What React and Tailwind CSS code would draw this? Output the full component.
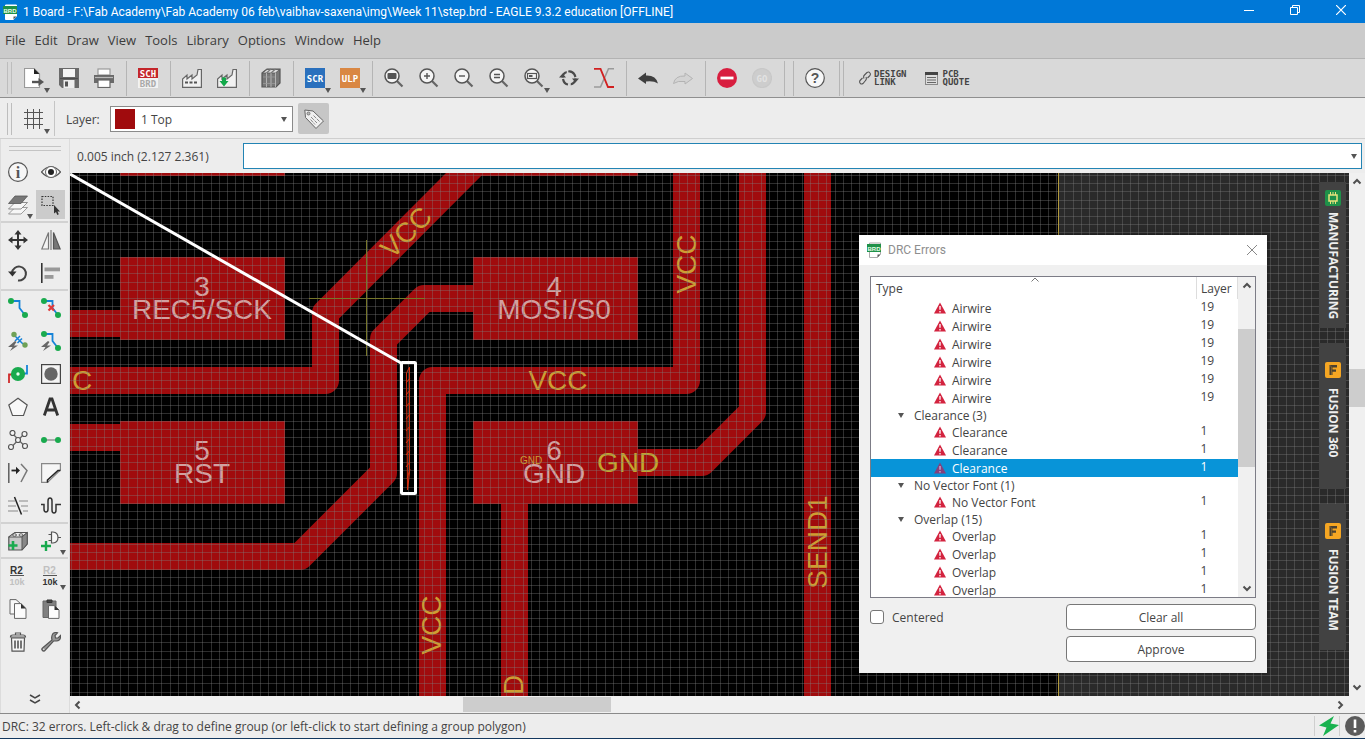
import React from "react";

const INK = "#4a4a4a";

function Svg({ s = 20, children, className = "" }) {
  return (
    <svg width={s} height={s} viewBox="0 0 20 20" fill="none" stroke={INK} strokeWidth="1.2" className={"block shrink-0 " + className} aria-hidden="true">
      {children}
    </svg>
  );
}

function Lens({ children }) {
  return (
    <Svg>
      <path d="M13 13 L18.5 18.5" stroke="#666" strokeWidth="2.2" />
      <circle cx="8" cy="8" r="7" fill="#f5f5f5" stroke="#555" strokeWidth="1.5" />
      {children}
    </Svg>
  );
}

function BrdIcon({ s = 16, line = "#fff" }) {
  return (
    <svg width={s} height={s} viewBox="0 0 16 16" className="block shrink-0" aria-hidden="true">
      <path d="M2.500 1 H13.500 V12 L10.500 15.500 H2.500 Z" fill="#fff" stroke={line} />
      <path d="M10.500 15.500 V12.500 H13.500 Z" fill="#555" />
      <rect x="0" y="2" width="14" height="8" fill="#1f9149" />
      <text x="7" y="8.500" textAnchor="middle" fontFamily="Liberation Sans" fontWeight="bold" fontSize="6" fill="#eaffea">BRD</text>
    </svg>
  );
}

function Tile({ top, bottom, text }) {
  return (
    <Svg>
      <rect width="20" height="20" fill={top} stroke="none" />
      {bottom && <rect y="10" width="20" height="10" fill={bottom} stroke="none" />}
      {text}
    </Svg>
  );
}

const tileText = { textAnchor: "middle", fontFamily: "DejaVu Sans Mono", fontWeight: "bold", stroke: "none" };

const icons = {
  open: (
    <Svg>
      <path d="M.5 .5 H10 L15.500 6 V19.500 H.5 Z" fill="#fff" stroke="#999" />
      <path d="M10 .5 V6 H15.500 Z" fill="#222" stroke="none" />
      <path d="M8 14 H15" stroke="#555" strokeWidth="2.400" />
      <path d="M14.500 10 L20 14 L14.500 18 Z" fill="#555" stroke="none" />
    </Svg>
  ),
  save: (
    <Svg>
      <path d="M0 0 H20 V20 H3 L0 17 Z" fill="#6a6a6a" stroke="none" />
      <rect x="4" y="1" width="12" height="8" fill="#f4f4f4" stroke="none" />
      <rect x="4.500" y="12" width="11" height="8" fill="#eee" stroke="none" />
      <rect x="6" y="13.500" width="3" height="5" fill="#555" stroke="none" />
      <path d="M1 10.500 H19" stroke="#4c4c4c" />
    </Svg>
  ),
  print: (
    <Svg>
      <rect x="4" y="1" width="12" height="6" fill="#fff" stroke="#999" />
      <rect x="0" y="7" width="20" height="8" fill="#6a6a6a" stroke="none" />
      <path d="M1 9.500 H19" stroke="#bbb" />
      <rect x="4" y="12" width="12" height="7.500" fill="#fff" stroke="#666" />
    </Svg>
  ),
  schbrd: (
    <Tile
      top="#c4262b"
      bottom="#f2f2f2"
      text={
        <>
          <text x="10" y="8.500" fontSize="9" fill="#fff" {...tileText}>SCH</text>
          <text x="10" y="18.500" fontSize="9" fill="#a9a9a9" {...tileText}>BRD</text>
        </>
      }
    />
  ),
  factory: (
    <Svg>
      <path d="M.6 19.400 V11 L5 7 V11 L10 7 V11 L15 7 L16 1.500 H19.400 V19.400 Z" fill="#f1f1f1" stroke="#666" />
      <path d="M3 14.500 H16" stroke="#555" strokeWidth="2" strokeDasharray="3 1.500" />
    </Svg>
  ),
  factoryDown: (
    <Svg>
      <path d="M.6 19.400 V11 L5 7 V11 L10 7 V11 L15 7 L16 1.500 H19.400 V19.400 Z" fill="#f1f1f1" stroke="#666" />
      <path d="M5 9.500 H9 V13 H11.500 L7 18.500 L2.500 13 H5 Z" fill="#13a94a" stroke="none" />
    </Svg>
  ),
  books: (
    <Svg>
      <path d="M1 5 L6 1 H19 V15 L15 19 H1 Z" fill="#777" stroke="#555" />
      <path d="M1.500 5 H14.500 L18.500 1.500 H6 Z" fill="#ddd" stroke="#555" strokeWidth=".8" />
      <path d="M5.500 5 L10 1 M10 5 L14.500 1" stroke="#777" />
      <path d="M5.500 5 V19 M10 5 V19 M14.500 5 V19" stroke="#c4c4c4" strokeWidth=".8" />
      <path d="M2 9 H14 M2 15.500 H14" stroke="#999" strokeWidth=".8" />
    </Svg>
  ),
  scr: <Tile top="#2a70bd" text={<text x="10" y="13.500" fontSize="9" fill="#fff" {...tileText}>SCR</text>} />,
  ulp: <Tile top="#d98743" text={<text x="10" y="13.500" fontSize="9" fill="#fff" {...tileText}>ULP</text>} />,
  fit: <Lens><rect x="3.500" y="5" width="9" height="6" rx="1" fill="#555" stroke="none" /></Lens>,
  zin: <Lens><path d="M5 8 H11 M8 5 V11" stroke="#555" strokeWidth="1.400" /></Lens>,
  zout: <Lens><path d="M5 8 H11" stroke="#555" strokeWidth="1.400" /></Lens>,
  zeq: <Lens><path d="M5 6.500 H11 M5 9.500 H11" stroke="#555" strokeWidth="1.400" /></Lens>,
  zsel: <Lens><rect x="3.500" y="5.500" width="9" height="5" stroke="#555" /><rect x="5" y="7" width="3.500" height="2" fill="#555" stroke="none" /></Lens>,
  refresh: (
    <Svg>
      <path d="M8.500 4 Q3.500 5 3.600 9.500 M11 16.500 Q16.500 15.500 16.400 10.500" stroke="#4a4a4a" strokeWidth="2.200" />
      <path d="M9 3.500 Q13 2.500 15.500 6.500 L16.500 9 M4 11 Q5 16 9 16.500" stroke="#4a4a4a" strokeWidth="2.200" />
      <path d="M0 9.500 L3.600 5.500 L7 9.500 Z M13 10.500 L16.500 14.500 L20 10.500 Z" fill="#4a4a4a" stroke="none" />
      <path d="M8.500 1 V6 M11 14 V19" stroke="#d9d9d9" strokeWidth="1.500" />
    </Svg>
  ),
  ratsnest: (
    <Svg>
      <path d="M20 .8 H14.500 L6.500 19 H0" stroke="#9a9a9a" strokeWidth="1.600" />
      <path d="M0 .8 H6.500 L14 19 H20" stroke="#d12020" strokeWidth="1.800" />
    </Svg>
  ),
  undo: <Svg><path d="M0 10.500 L8 4.500 V7.500 Q18 7 20 15.500 Q15.500 12.500 8 13.500 V16 Z" fill="#3f3f3f" stroke="none" /></Svg>,
  redo: <Svg><path d="M19.500 10.500 L12 5 V8 Q2 7.500 .5 15.500 Q4.500 12.500 12 13.500 V16 Z" fill="#d3d3d3" stroke="#b3b3b3" strokeWidth="1" /></Svg>,
  stop: <Svg><circle cx="10" cy="10" r="10" fill="#d81e3f" stroke="none" /><path d="M3.500 10 H16.500" stroke="#fff" strokeWidth="2.800" /></Svg>,
  go: <Svg><circle cx="10" cy="10" r="9.500" fill="#cdcdcd" stroke="#c8c8c8" /><text x="10" y="13.500" fontSize="9" fill="#e2e2e2" {...tileText}>GO</text></Svg>,
  help: <Svg><circle cx="10" cy="10" r="9.300" fill="#f7f7f7" stroke="#555" /><text x="10" y="15" textAnchor="middle" fontFamily="Liberation Sans" fontWeight="bold" fontSize="14" fill="#555" stroke="none">?</text></Svg>,
  grid: <Svg><path d="M3.500 0 V20 M9.500 0 V20 M15.500 0 V20 M0 3.500 H19 M0 9.500 H19 M0 15.500 H19" stroke="#555" strokeWidth="1" /></Svg>,
  tag: (
    <Svg>
      <path d="M.8 1 L9 2 L19.500 12 L12 19.500 L1.500 8.500 Z" fill="#efefef" stroke="#666" strokeWidth="1" />
      <circle cx="4.500" cy="4.500" r="1.500" fill="#bbb" stroke="#666" strokeWidth=".8" />
      <path d="M7 8 L13 14 M9.500 6.500 L15.500 12.500 M6.500 10.500 L11 15.500" stroke="#8a8a8a" strokeWidth="1" strokeDasharray="4 1" />
    </Svg>
  ),
  info: <Svg><circle cx="10" cy="10" r="9.400" fill="#f6f6f6" stroke="#555" /><text x="10" y="15.500" textAnchor="middle" fontFamily="Liberation Serif" fontWeight="bold" fontSize="16" fill="#555" stroke="none">i</text></Svg>,
  eye: (
    <Svg>
      <path d="M.5 10 Q10 -.5 19.500 10 Q10 20.500 .5 10 Z" fill="#f4f4f4" stroke="#555" />
      <circle cx="10" cy="10" r="5.500" fill="#fff" stroke="#666" strokeWidth="1" />
      <circle cx="10" cy="10" r="3" fill="#222" stroke="none" />
    </Svg>
  ),
  layers: (
    <Svg>
      <path d="M.5 19 L7 12.500 H19.500 L13 19 Z" fill="#f6f6f6" stroke="#888" strokeWidth=".8" />
      <path d="M.5 14 L7 7.500 H19.500 L13 14 Z" fill="#f6f6f6" stroke="#777" strokeWidth=".8" />
      <path d="M.5 8.500 L7 1 H19.500 L13 8.500 Z" fill="#777" stroke="#555" strokeWidth=".8" />
    </Svg>
  ),
  group: (
    <Svg>
      <rect x="1" y="1.500" width="11" height="9" stroke="#333" strokeDasharray="1.500 1.300" />
      <path d="M13 10 V18.500 L15 17 L16.300 20 L17.800 19.300 L16.500 16.500 H19 Z" fill="#333" stroke="none" />
    </Svg>
  ),
  move: (
    <Svg>
      <path d="M10 3 V17 M3 10 H17" stroke="#333" strokeWidth="2" />
      <path d="M10 0 L13.500 4.500 H6.500 Z M10 20 L6.500 15.500 H13.500 Z M0 10 L4.500 6.500 V13.500 Z M20 10 L15.500 13.500 V6.500 Z" fill="#333" stroke="none" />
    </Svg>
  ),
  mirror: (
    <Svg>
      <path d="M7.500 2.500 V19 H.8 Z" fill="#f4f4f4" stroke="#777" />
      <path d="M12.500 2.500 V19 H19.200 Z" fill="#777" stroke="#555" />
      <path d="M10 0 V20" stroke="#666" strokeWidth="1" />
    </Svg>
  ),
  rotate: (
    <Svg>
      <path d="M4 9.500 A7 7 0 1 1 10 17.500" stroke="#444" strokeWidth="2" />
      <path d="M0 8.500 H8.500 L4.500 13.500 Z" fill="#333" stroke="none" />
    </Svg>
  ),
  align: (
    <Svg>
      <path d="M.8 0 V20" stroke="#333" strokeWidth="1.600" />
      <rect x="3.500" y="4.500" width="15.500" height="3.800" fill="#999" stroke="none" />
      <rect x="3.500" y="12" width="9" height="3.800" fill="#999" stroke="none" />
    </Svg>
  ),
  route: (
    <Svg>
      <path d="M3 3 H11.500 V10 L17 17" stroke="#1683d8" strokeWidth="1.800" />
      <circle cx="3" cy="3" r="3" fill="#19aa4e" stroke="none" />
      <circle cx="17" cy="17" r="3" fill="#19aa4e" stroke="none" />
    </Svg>
  ),
  ripup: (
    <Svg>
      <path d="M3 3 H11.500 V10 L17 17" stroke="#1683d8" strokeWidth="1.800" />
      <circle cx="3" cy="3" r="3" fill="#19aa4e" stroke="none" />
      <circle cx="17" cy="17" r="3" fill="#19aa4e" stroke="none" />
      <path d="M7.500 7 L13 12.500 M13 7 L7.500 12.500" stroke="#e03a3a" strokeWidth="2.200" />
    </Svg>
  ),
  fanout: (
    <Svg>
      <path d="M6 4 L15 13 M7 10 L12 5 M9.500 12 L14 7.500" stroke="#1683d8" strokeWidth="1.500" />
      <circle cx="6" cy="3.500" r="2.700" fill="#6fa156" stroke="none" />
      <circle cx="17" cy="14" r="2.700" fill="#6fa156" stroke="none" />
      <path d="M7 10 L0 16 H4.500 L2 20 L10 14.500 H6 L8.500 11 Z" fill="#666" stroke="none" />
    </Svg>
  ),
  autoroute: (
    <Svg>
      <path d="M3 3 H11.500 V10 L17 17" stroke="#1683d8" strokeWidth="1.800" />
      <circle cx="3" cy="3" r="3" fill="#19aa4e" stroke="none" />
      <circle cx="17" cy="17" r="3" fill="#19aa4e" stroke="none" />
      <path d="M7 10 L0 16 H4.500 L2 20 L10 14.500 H6 L8.500 11 Z" fill="#666" stroke="none" />
    </Svg>
  ),
  via: (
    <Svg>
      <path d="M1 19 V10.500 H6" stroke="#cf2a2a" strokeWidth="1.800" />
      <path d="M19 1 V9.500 H14" stroke="#1683d8" strokeWidth="1.800" />
      <circle cx="10" cy="10" r="4.400" stroke="#19aa4e" strokeWidth="5.400" fill="#e8fff0" />
    </Svg>
  ),
  hole: <Svg><rect x=".6" y=".6" width="18.800" height="18.800" fill="#f4f4f4" stroke="#444" /><circle cx="10" cy="10" r="6.700" fill="#666" stroke="none" /></Svg>,
  polygon: <Svg><path d="M10 1.200 L19.200 8 L15.500 18.500 H4.500 L.8 8 Z" fill="#f8f8f8" stroke="#555" /></Svg>,
  text: <Svg><path d="M3.300 18.500 L9 2 H11 L16.700 18.500 M5.500 13 H14.500" stroke="#333" strokeWidth="2.800" /></Svg>,
  net: (
    <Svg>
      <path d="M4 3 L17 16.500 M16 4 L3 17.500" stroke="#666" />
      <g fill="#f4f4f4" stroke="#555"><circle cx="4.500" cy="3" r="2.500" /><circle cx="16.500" cy="4" r="2.500" /><circle cx="3" cy="17" r="2.500" /><circle cx="17" cy="16" r="2.500" /><circle cx="10" cy="10" r="2.500" /></g>
    </Svg>
  ),
  signal: <Svg><path d="M3 10 H17" stroke="#999" strokeWidth="1.600" /><circle cx="3" cy="10" r="3" fill="#19aa4e" stroke="none" /><circle cx="17" cy="10" r="3" fill="#19aa4e" stroke="none" /></Svg>,
  split: (
    <Svg>
      <path d="M.8 0 V20" stroke="#555" strokeWidth="1.400" />
      <path d="M3.500 7.500 H9" stroke="#222" strokeWidth="1.800" />
      <path d="M8 3.800 L12 7.500 L8 11.200 Z" fill="#222" stroke="none" />
      <path d="M13 1 L19 7.500 L13 19" stroke="#777" strokeWidth="1.500" />
    </Svg>
  ),
  miter: (
    <Svg>
      <path d="M.6 .6 H19.400 V7 L6.500 19.400 H.6 Z" fill="#f6f6f6" stroke="#888" />
      <path d="M19.400 7.500 H17 L6.500 17 V19.500" stroke="#222" strokeWidth="1.600" />
    </Svg>
  ),
  slice: <Svg><path d="M0 5 H7 M11 5 H20 M0 10 H8 M13 10 H20 M0 15 H10 M15 15 H20" stroke="#aaa" strokeWidth="1.500" /><path d="M6.500 1 L13.500 18.500" stroke="#222" strokeWidth="1.500" /></Svg>,
  meander: <Svg><path d="M0 8.500 H3 V13 Q3 16 5 16 Q7 16 7 13 V5 Q7 2 9 2 Q11 2 11 5 V14 Q11 17 13 17 Q15 17 15 14 V8.500 H20" stroke="#333" strokeWidth="1.500" /></Svg>,
  package: (
    <Svg>
      <path d="M.8 6 L7 1.500 H19.200 V13 L14 19 H.8 Z" fill="#c8c8c8" stroke="#555" />
      <path d="M.8 6 L7 1.500 H19.200 L14 6 Z" fill="#eee" stroke="#555" strokeWidth="1" />
      <path d="M14 6 V19 L19.200 13 V1.500 Z" fill="#888" stroke="#555" strokeWidth="1" />
      <ellipse cx="6.500" cy="4" rx="2" ry="1.200" fill="#fff" stroke="#444" strokeWidth=".9" />
      <ellipse cx="13" cy="4" rx="2" ry="1.200" fill="#fff" stroke="#444" strokeWidth=".9" />
      <path d="M5 10 V19 M.5 14.500 H9.500" stroke="#19aa4e" strokeWidth="2.600" />
    </Svg>
  ),
  gate: (
    <Svg>
      <path d="M10.500 1 H12 Q17 1.500 17 6.500 Q17 11.500 12 12 H10.500 Z M7.500 3.500 H10.500 M7.500 9.500 H10.500 M17 6.500 H20" fill="#f6f6f6" stroke="#555" />
      <path d="M5 10 V20 M0 15 H10" stroke="#19aa4e" strokeWidth="2.400" />
    </Svg>
  ),
  name: (
    <Svg>
      <text x="8.500" y="8" textAnchor="middle" fontFamily="Liberation Sans" fontWeight="bold" fontSize="10" fill="#333" stroke="none">R2</text>
      <path d="M2 9.500 H16" stroke="#555" strokeWidth="1" />
      <text x="9" y="18.500" textAnchor="middle" fontFamily="Liberation Sans" fontWeight="bold" fontSize="9" fill="#c0c0c0" stroke="none">10k</text>
    </Svg>
  ),
  value: (
    <Svg>
      <text x="8.500" y="8" textAnchor="middle" fontFamily="Liberation Sans" fontWeight="bold" fontSize="10" fill="#c0c0c0" stroke="none">R2</text>
      <path d="M2 9.500 H16" stroke="#555" strokeWidth="1" />
      <text x="9" y="18.500" textAnchor="middle" fontFamily="Liberation Sans" fontWeight="bold" fontSize="9" fill="#333" stroke="none">10k</text>
    </Svg>
  ),
  copy: (
    <Svg>
      <path d="M2 .6 H8 L13 5 V15 H2 Z" fill="#f8f8f8" stroke="#666" strokeWidth="1" />
      <path d="M6.500 4.600 H13 L18 9.500 V19.400 H6.500 Z" fill="#fcfcfc" stroke="#666" strokeWidth="1" />
      <path d="M13 4.600 V9.500 H18 Z" fill="#333" stroke="none" />
    </Svg>
  ),
  paste: (
    <Svg>
      <path d="M2 2 H15 V18.500 H2 Z" fill="#808080" stroke="#666" strokeWidth="1" />
      <path d="M6 3.500 V1 H11 V3.500 Z" fill="#444" stroke="#333" strokeWidth="1" />
      <path d="M7.500 6.600 H13.500 L18 11 V19.400 H7.500 Z" fill="#fcfcfc" stroke="#666" strokeWidth="1" />
      <path d="M13.500 6.600 V11 H18 Z" fill="#333" stroke="none" />
    </Svg>
  ),
  trash: (
    <Svg>
      <path d="M3.500 6 L4 19.200 H16 L16.500 6 Z" fill="#f6f6f6" stroke="#555" />
      <path d="M2.500 5 Q2.500 3 5 3 H15 Q17.500 3 17.500 5 Z M7.500 3 V1 H12.500 V3" fill="#f6f6f6" stroke="#555" />
      <path d="M7 8.500 V16.500 M10 8.500 V16.500 M13 8.500 V16.500" stroke="#555" strokeWidth="1.600" />
    </Svg>
  ),
  wrench: (
    <Svg>
      <path d="M12 1.500 Q14.500 0 16.500 .8 L14 3.500 L14.500 6 L17 6 L19.500 3.500 Q20 8.500 15.500 9 Q13.500 9 12.500 9 L3.500 19 Q1.500 19.500 .8 17.500 Q.8 16.500 1.500 16 L11 8 Q10 4 12 1.500 Z" fill="#999" stroke="#555" />
      <circle cx="2.800" cy="17.200" r=".7" fill="#eee" stroke="none" />
    </Svg>
  ),
};

function Caret({ className = "" }) {
  return (
    <svg width="6" height="5" viewBox="0 0 6 5" className={className} aria-hidden="true">
      <path d="M0 0 H6 L3 5 Z" fill="#555" />
    </svg>
  );
}

function ToolButton({ icon, label, menu }) {
  return (
    <button type="button" aria-label={label} className="relative flex h-[38px] w-[35px] shrink-0 items-center justify-center">
      {icons[icon]}
      {menu && <Caret className="absolute right-px bottom-1" />}
    </button>
  );
}

function Sep() {
  return <span className="flex h-[35px] w-[9px] shrink-0 justify-end pr-[3px]"><span className="w-px bg-[#b5b5b5]" /></span>;
}

function Handle() {
  return <span className="ml-[7px] h-8 w-[5px] shrink-0 border-x border-[#bdbdbd]" />;
}

const toolbarGroups = [
  [["open", "Open", true], ["save", "Save"], ["print", "Print"]],
  [["schbrd", "Switch to schematic"]],
  [["factory", "CAM processor"], ["factoryDown", "Export CAM"]],
  [["books", "Library manager"]],
  [["scr", "Run script", true], ["ulp", "Run ULP", true]],
  [["fit", "Fit"], ["zin", "Zoom in"], ["zout", "Zoom out"], ["zeq", "Redraw"], ["zsel", "Zoom select", true], ["refresh", "Refresh"], ["ratsnest", "Ratsnest"]],
  [["undo", "Undo"], ["redo", "Redo"]],
  [["stop", "Stop"], ["go", "Go"]],
];

const sideGroups = [
  [["info", "Info"], ["eye", "Show"], ["layers", "Layers", true], ["group", "Group"]],
  [["move", "Move"], ["mirror", "Mirror"], ["rotate", "Rotate"], ["align", "Align"]],
  [["route", "Route"], ["ripup", "Ripup"], ["fanout", "Fanout"], ["autoroute", "Autoroute"], ["via", "Via"], ["hole", "Hole"], ["polygon", "Polygon"], ["text", "Text"], ["net", "Ratsnest"], ["signal", "Signal"], ["split", "Split"], ["miter", "Miter"], ["slice", "Slice"], ["meander", "Meander"]],
  [["package", "Add part"], ["gate", "Invoke", true]],
  [["name", "Name"], ["value", "Value", true], ["copy", "Copy"], ["paste", "Paste"], ["trash", "Delete"], ["wrench", "Change"]],
];

const vLines = Array.from({ length: 300 }, (_, i) => Math.round(1 + i * 8.21));
const hLines = Array.from({ length: 160 }, (_, i) => Math.round(2 + i * 8.2));

const COPPER = "#a00b0d";

function Board() {
  return (
    <svg className="block h-full w-full bg-black" role="img" aria-label="Board layout">
      <rect x="988" y="0" width="100%" height="100%" fill="#2a2a2a" />
      <g transform="translate(-70 -173)">
        <g stroke={COPPER} strokeWidth="27" fill="none" strokeLinejoin="round">
          <path d="M60 323.500 H125" />
          <path d="M60 437.500 H125" />
          <path d="M480 158 L325.500 313 V380.500 H60" />
          <path d="M480 298.500 H424 L383.500 339 V473 L300 556.500 H60" />
          <path d="M686.500 160 V380.500 H432.500 V1400" />
          <path d="M752.500 160 V412 L702 462.500 H630" />
          <path d="M817.500 160 V1400" />
          <path d="M514.500 495 V1400" />
        </g>
        <g fill={COPPER} shapeRendering="crispEdges">
          <rect x="120" y="100" width="165" height="76" />
          <rect x="473" y="100" width="165" height="76" />
          <rect x="120" y="257" width="165" height="83" />
          <rect x="473" y="257" width="165" height="83" />
          <rect x="120" y="421" width="165" height="83" />
          <rect x="473" y="421" width="165" height="83" />
        </g>
        <g fontFamily="Liberation Sans, Arial, sans-serif" fontSize="28" textAnchor="middle" fill="#d2a0a0">
          <text x="202" y="296">3</text>
          <text x="202" y="319">REC5/SCK</text>
          <text x="554" y="296">4</text>
          <text x="554" y="319">MOSI/S0</text>
          <text x="202" y="460">5</text>
          <text x="202" y="483">RST</text>
          <text x="554" y="460">6</text>
          <text x="554" y="483">GND</text>
        </g>
        <g fontFamily="Liberation Sans, Arial, sans-serif" fontSize="28" textAnchor="middle" fill="#cd9e33">
          <text x="558" y="390">VCC</text>
          <text x="628" y="472" fill="#c2a52f">GND</text>
          <text x="531" y="464" fontSize="10">GND</text>
          <text x="82" y="390">C</text>
          <text transform="translate(413 239) rotate(-45)">VCC</text>
          <text transform="translate(696 264) rotate(-90)">VCC</text>
          <text transform="translate(441 625) rotate(-90)">VCC</text>
          <text transform="translate(827 542) rotate(-90)">SEND1</text>
          <text transform="translate(523 695) rotate(-90)" textAnchor="start">D</text>
        </g>
      </g>
      <g fill="#808080" fillOpacity=".36" shapeRendering="crispEdges">
        {vLines.map((x) => <rect key={x} x={x} y="0" width="1" height="100%" />)}
        {hLines.map((y) => <rect key={y} x="0" y={y} width="100%" height="1" />)}
      </g>
      <rect x="988" y="0" width="1" height="100%" fill="#b39a3c" />
      <path d="M239 125.500 H355 M296.500 67 V183" stroke="#77772a" strokeWidth="1" />
      <path d="M0 1 L331 190" stroke="#fff" strokeWidth="3" />
      <rect x="331.500" y="189.500" width="14" height="131" rx="1" fill="none" stroke="#fff" strokeWidth="3" />
      <path d="M337.500 317 L336.500 200 L339.500 194 V300 L337.500 317" fill="none" stroke="#d8300f" strokeWidth="1" />
      <path d="M336 210 l4 -5 M336 222 l4 -5 M336 234 l4 -5 M336 246 l4 -5 M336 258 l4 -5 M336 270 l4 -5 M336 282 l4 -5 M336 294 l4 -5 M337 306 l3 -10" stroke="#d8300f" />
    </svg>
  );
}

const errorRows = [
  ...Array.from({ length: 6 }, () => ({ label: "Airwire", layer: "19" })),
  { group: "Clearance (3)" },
  { label: "Clearance", layer: "1" },
  { label: "Clearance", layer: "1" },
  { label: "Clearance", layer: "1", selected: true },
  { group: "No Vector Font (1)" },
  { label: "No Vector Font", layer: "1" },
  { group: "Overlap (15)" },
  ...Array.from({ length: 4 }, () => ({ label: "Overlap", layer: "1" })),
];

function Warning({ dim }) {
  return (
    <svg width="12" height="12" viewBox="0 0 12 12" className="block shrink-0" aria-hidden="true">
      <path d="M6 .5 L12 11.500 H0 Z" fill={dim ? "#84407c" : "#d3233f"} />
      <path d="M6 4 V7.800 M6 9 V10.500" stroke={dim ? "#c8b8d8" : "#fff"} strokeWidth="1.300" />
    </svg>
  );
}

function Chevron({ dir, className = "" }) {
  const d = {
    up: "M1.500 6.500 L5 3 L8.500 6.500",
    down: "M1.500 3.500 L5 7 L8.500 3.500",
    left: "M6.500 1.500 L3 5 L6.500 8.500",
    right: "M3.500 1.500 L7 5 L3.500 8.500",
  }[dir];
  return (
    <svg width="10" height="10" viewBox="0 0 10 10" className={"block " + className} aria-hidden="true">
      <path d={d} fill="none" stroke="#505050" strokeWidth="2" />
    </svg>
  );
}

function DrcDialog() {
  return (
    <section role="dialog" aria-labelledby="drc-title" className="absolute top-[62px] left-[789px] w-[408px] bg-[#f0f0f0] shadow-[0_0_4px_rgba(0,0,0,0.5)]">
      <header className="flex h-[30px] items-center bg-white pr-[9px] pl-2">
        <BrdIcon line="#aaa" />
        <h2 id="drc-title" className="ml-[5px] flex-1 font-[Roboto] text-[12px] text-[#8e8e8e]">DRC Errors</h2>
        <button type="button" aria-label="Close">
          <svg width="12" height="12" viewBox="0 0 12 12" aria-hidden="true"><path d="M1 1 L11 11 M11 1 L1 11" stroke="#888" /></svg>
        </button>
      </header>
      <div className="px-[11px] pt-[11px] pb-[11px]">
        <div className="relative flex h-[322px] border border-[#7c7c86] bg-white">
          <div className="min-w-0 flex-1 overflow-hidden">
            <table className="w-full table-fixed border-collapse text-left text-[12px] leading-4 text-[#444]">
              <thead>
                <tr className="h-[22px]">
                  <th className="border-r border-[#ddd] p-0 pt-px pl-[5px] align-middle font-normal">Type</th>
                  <th className="w-[41px] border-r border-[#ddd] p-0 pt-px pl-1 align-middle font-normal">Layer</th>
                </tr>
              </thead>
              <tbody>
                {errorRows.map((r, i) =>
                  r.group ? (
                    <tr key={i} className="h-4">
                      <td className="p-0" colSpan={2}>
                        <div className="flex h-4 items-center pl-[27px]">
                          <Caret className="mr-[10px] shrink-0" />
                          <span className="pt-[2px]">{r.group}</span>
                        </div>
                      </td>
                    </tr>
                  ) : (
                    <tr key={i} className={r.selected ? "h-[18px] bg-[#0894d8] text-white" : "h-[18px]"}>
                      <td className="p-0">
                        <div className="flex h-[18px] items-center gap-[6px] pl-[63px]">
                          <Warning dim={r.selected} />
                          <span className="pt-[2px]">{r.label}</span>
                        </div>
                      </td>
                      <td className="p-0 pl-1 align-top leading-[15px]">{r.layer}</td>
                    </tr>
                  )
                )}
              </tbody>
            </table>
          </div>
          <svg width="8" height="5" viewBox="0 0 8 5" className="absolute top-0 left-[160px]" aria-hidden="true"><path d="M.5 4.500 L4 1 L7.500 4.500" fill="none" stroke="#777" /></svg>
          <div className="flex w-[17px] flex-col items-center bg-[#f0f0f0]">
            <Chevron dir="up" className="mt-1" />
            <div className="mt-[38px] h-[138px] w-full bg-[#cdcdcd]" />
            <Chevron dir="down" className="mt-auto mb-1" />
          </div>
        </div>
        <div className="mt-[6px] flex items-start justify-between">
          <label className="flex h-[26px] items-center gap-2 text-[12px] text-[#444]">
            <input type="checkbox" className="h-[14px] w-[14px] appearance-none rounded-[3px] border border-[#777] bg-white" />
            <span className="pt-[2px]">Centered</span>
          </label>
          <div className="flex w-[190px] flex-col gap-[6px]">
            <button type="button" className="h-[26px] rounded border border-[#777] bg-white pt-px text-[12px] text-[#444]">Clear all</button>
            <button type="button" className="h-[26px] rounded border border-[#777] bg-white pt-px text-[12px] text-[#444]">Approve</button>
          </div>
        </div>
      </div>
    </section>
  );
}

function ChipIcon() {
  return (
    <svg width="16" height="16" viewBox="0 0 16 16" className="block" aria-hidden="true">
      <rect width="16" height="16" rx="2" fill="#1f9149" />
      <rect x="4" y="5" width="8" height="6" fill="#1f9149" stroke="#e9e27c" strokeWidth="1.500" />
      <path d="M5.500 2 V5 M8 2 V5 M10.500 2 V5 M5.500 11 V14 M8 11 V14 M10.500 11 V14" stroke="#e9e27c" />
    </svg>
  );
}

function FusionIcon() {
  return (
    <svg width="16" height="16" viewBox="0 0 16 16" className="block" aria-hidden="true">
      <rect width="16" height="16" rx="2" fill="#f5a623" />
      <path d="M4.500 3 H12 V5.500 H7.500 V7.500 H11 V9.800 H7.500 V13 H4.500 Z" fill="#4a4030" />
      <path d="M4.500 3 L6.500 5 V13" stroke="#8c6a30" fill="none" strokeWidth=".8" />
    </svg>
  );
}

const tabs = [
  { label: "MANUFACTURING", icon: <ChipIcon />, pad: "pt-2 gap-[6px]" },
  { label: "FUSION 360", icon: <FusionIcon />, pad: "pt-[19px] gap-[10px]" },
  { label: "FUSION TEAM", icon: <FusionIcon />, pad: "pt-[19px] gap-[10px]" },
];

export default function App() {
  return (
    <div className="flex h-screen flex-col overflow-hidden bg-[#ededed] text-[12px] text-[#444] [font-family:'Open_Sans','Noto_Sans',sans-serif] [&_input]:outline-none">
      <header className="flex h-[23px] shrink-0 items-center bg-[#0078d7] pl-[3px] text-white">
        <BrdIcon />
        <h1 className="ml-1 flex-1 truncate font-[Roboto] text-[12px] font-normal">1 Board - F:\Fab Academy\Fab Academy 06 feb\vaibhav-saxena\img\Week 11\step.brd - EAGLE 9.3.2 education [OFFLINE]</h1>
        <div className="flex gap-9 pr-[19px] pb-[3px]">
          <button type="button" aria-label="Minimize"><svg width="10" height="10" className="block"><path d="M0 5.500 H10" stroke="#fff" /></svg></button>
          <button type="button" aria-label="Restore"><svg width="10" height="10" className="block" fill="none" stroke="#fff"><path d="M.5 2.500 H7.500 V9.500 H.5 Z M2.500 2.500 V.5 H9.500 V7.500 H7.500" /></svg></button>
          <button type="button" aria-label="Close"><svg width="10" height="10" className="block"><path d="M0 0 L10 10 M10 0 L0 10" stroke="#fff" strokeWidth="1.200" /></svg></button>
        </div>
      </header>

      <nav aria-label="Main menu" className="flex h-[36px] shrink-0 items-center gap-[9px] border-b border-[#b3b3b3] bg-[#cbcbcb] pt-px pl-[5px] text-[13px] text-[#3c3c3c]">
        {["File", "Edit", "Draw", "View", "Tools", "Library", "Options", "Window", "Help"].map((m) => (
          <button type="button" key={m}>{m}</button>
        ))}
      </nav>

      <div className="flex h-[39px] shrink-0 items-center border-b border-[#8f8f8f] bg-[#d9d9d9]">
        <Handle />
        <span className="w-1 shrink-0" />
        {toolbarGroups.map((g, i) => (
          <React.Fragment key={i}>
            {i > 0 && <Sep />}
            {g.map(([icon, label, menu]) => <ToolButton key={icon} icon={icon} label={label} menu={menu} />)}
          </React.Fragment>
        ))}
        <Sep />
        <Sep />
        <ToolButton icon="help" label="Help" />
        <span className="ml-[7px] h-[35px] w-[5px] shrink-0 border-x border-[#b5b5b5]" />
        <button type="button" className="ml-[15px] flex items-center gap-[3px] text-left font-['DejaVu_Sans_Mono'] text-[9px] leading-[8px] font-bold">
          <svg width="12" height="14" viewBox="0 0 12 14" fill="none" stroke="#555" strokeWidth="1.100" aria-hidden="true">
            <path d="M5 7.500 Q4 5.500 5.500 4 L8 1.500 Q10 .2 11 2 Q12 3.500 10.500 5 L8.500 7 M7 6 Q8 8 6.500 9.500 L4 12.500 Q2 13.800 1 12 Q0 10.500 1.500 9 L3.500 7" />
          </svg>
          <span>DESIGN<br />LINK</span>
        </button>
        <button type="button" className="ml-[18px] flex items-center gap-[5px] text-left font-['DejaVu_Sans_Mono'] text-[9px] leading-[8px] font-bold">
          <svg width="13" height="13" viewBox="0 0 13 13" aria-hidden="true">
            <rect x=".5" y=".5" width="12" height="12" fill="#ddd" stroke="#888" />
            <rect width="13" height="3" fill="#444" />
            <path d="M2 5.500 H11 M2 8 H11 M2 10.500 H11" stroke="#666" />
          </svg>
          <span>PCB<br />QUOTE</span>
        </button>
      </div>

      <div className="flex h-[41px] shrink-0 items-center border-b border-[#cfcfcf] pt-px">
        <Handle />
        <span className="w-1 shrink-0" />
        <ToolButton icon="grid" label="Grid" menu />
        <span className="ml-[3px] h-[35px] w-px bg-[#c5c5c5]" />
        <label htmlFor="layer" className="ml-[11px] w-11 pt-[2px]">Layer:</label>
        <div className="relative">
          <span className="pointer-events-none absolute top-[3px] left-[5px] h-5 w-5 bg-[#a00b0d]" />
          <select id="layer" className="block h-[26px] w-[183px] appearance-none border border-[#8a8a8a] bg-white pt-[2px] pl-[30px] text-[12px]">
            <option>1 Top</option>
          </select>
          <Caret className="pointer-events-none absolute top-[11px] right-[6px]" />
        </div>
        <button type="button" aria-label="Layer tags" className="ml-[5px] flex h-[31px] w-[31px] items-center justify-center rounded-xs bg-[#c6c6c6]">{icons.tag}</button>
      </div>

      <main className="flex min-h-0 flex-1">
        <aside aria-label="Tools" className="flex w-[70px] shrink-0 flex-col border-r border-l border-[#dcdcdc] pt-[7px]">
          <span className="mb-1 ml-2 h-[5px] w-[52px] shrink-0 border-y border-[#c4c4c4]" />
          {sideGroups.map((g, i) => (
            <div key={i} className={"flex w-[67px] shrink-0 flex-wrap " + (i < sideGroups.length - 1 ? "border-b-2 border-[#d2d2d2]" : "")}>
              {g.map(([icon, label, menu]) => (
                <button
                  type="button"
                  key={icon}
                  aria-label={label}
                  className={icon === "group" ? "relative flex h-[33px] w-[33px] items-center justify-center border-2 border-[#ededed] bg-[#cbcbcb]" : "relative flex h-[33px] w-[33px] items-center justify-center"}
                >
                  {icons[icon]}
                  {menu && <Caret className="absolute right-px bottom-[2px]" />}
                </button>
              ))}
            </div>
          ))}
          <button type="button" aria-label="More tools" className="mt-auto mb-[9px] self-center">
            <svg width="12" height="10" viewBox="0 0 12 10" className="block" fill="none" stroke="#444" strokeWidth="1.500" aria-hidden="true"><path d="M1 1 L6 4 L11 1 M1 6 L6 9 L11 6" /></svg>
          </button>
        </aside>

        <div className="flex min-w-0 flex-1 flex-col">
          <div className="flex h-[34px] shrink-0 items-center pr-[3px]">
            <output className="w-[173px] shrink-0 pt-[2px] pl-[7px]">0.005 inch (2.127 2.361)</output>
            <div className="relative flex-1 bg-[#e4f1f9]">
              <input aria-label="Command" className="block h-[26px] w-full border border-[#2384b4] bg-white px-2" />
              <button type="button" aria-label="Command history" className="absolute top-[11px] right-[5px]"><Caret className="block" /></button>
            </div>
          </div>
          <div className="flex min-h-0 flex-1">
            <div className="relative min-w-0 flex-1 overflow-hidden">
              <Board />
              <div className="absolute top-[9px] right-[3px] flex flex-col gap-[15px]">
                {tabs.map((t) => (
                  <button type="button" key={t.label} className={"flex h-[146px] w-[27px] flex-col items-center bg-[#424242] text-[12px] leading-4 font-bold whitespace-nowrap text-[#eee] " + t.pad}>
                    {t.icon}
                    <span className="[writing-mode:vertical-rl]">{t.label}</span>
                  </button>
                ))}
              </div>
              <DrcDialog />
            </div>
            <div className="flex w-4 shrink-0 flex-col items-center bg-[#f0f0f0]">
              <Chevron dir="up" className="mt-1" />
              <div className="mt-[182px] h-[38px] w-full bg-[#cdcdcd]" />
              <Chevron dir="down" className="mt-auto mb-1" />
            </div>
          </div>
          <div className="flex h-[17px] shrink-0 items-center bg-[#f0f0f0] pr-5 pl-[3px]">
            <Chevron dir="left" />
            <div className="ml-[380px] h-[15px] w-[148px] bg-[#cdcdcd]" />
            <Chevron dir="right" className="ml-auto" />
          </div>
        </div>
      </main>

      <footer className="flex h-[26px] shrink-0 items-center border-t border-b border-t-[#8a8a8a] border-b-[#12375e] pl-[2px]">
        <p className="flex-1 truncate pt-[2px]">DRC: 32 errors. Left-click &amp; drag to define group (or left-click to start defining a group polygon)</p>
        <span className="flex h-5 w-[26px] items-center justify-end border-x border-[#cfcfcf]">
          <Svg><path d="M15 0 L0 9.500 L7.500 11.500 L4 20 L20 9 L11.500 7.500 Z" fill="#19b24f" stroke="none" /></Svg>
        </span>
        <span className="flex w-[25px] justify-end">
          <Svg><circle cx="10" cy="10" r="10" fill="#5b5b5b" stroke="none" /><path d="M10 3.500 V12 M10 14 V16.500" stroke="#fff" strokeWidth="2.600" /></Svg>
        </span>
      </footer>
    </div>
  );
}
